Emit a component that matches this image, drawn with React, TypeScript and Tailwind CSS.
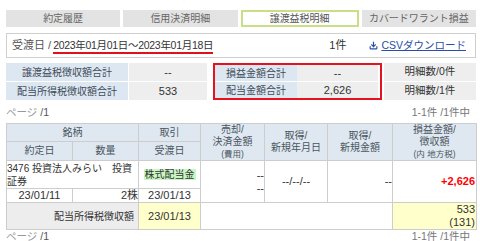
import { Download } from "lucide-react";

const font = "font-['Liberation_Sans','Noto_Sans_CJK_JP',sans-serif]";

const tabs = ["約定履歴", "信用決済明細", "譲渡益税明細", "カバードワラント損益"];

function Tabs() {
  return (
    <div className="flex gap-[3px] text-[10px]">
      {tabs.map((t, i) =>
        i === 2 ? (
          <div
            key={t}
            className="flex h-[17px] flex-1 items-center justify-center border-2 border-[#c8df86] bg-white text-[#555]"
          >
            {t}
          </div>
        ) : (
          <div
            key={t}
            className="flex h-[17px] flex-1 items-center justify-center bg-[#e3e3e3] text-[#666]"
          >
            {t}
          </div>
        )
      )}
    </div>
  );
}

function DateBar() {
  return (
    <div className="mt-[6px] flex h-[25px] items-center border border-[#cfcfcf] bg-white pl-[5px] pr-[5px] text-[11px] text-[#333]">
      <span className="text-[#555]">受渡日 / </span>
      <span className="ml-[2px] border-b-2 border-[#e0101c] text-[10.5px] leading-[14px] tracking-[-0.3px]">
        2023年01月01日～2023年01月18日
      </span>
      <span className="ml-auto mr-[23px] text-[11px]">1件</span>
      <a className="mr-[4px] flex items-center text-[10.5px] text-[#2a4ea8] underline">
        <Download size={9} strokeWidth={3} className="mr-[3px]" />
        CSVダウンロード
      </a>
    </div>
  );
}

function Summary() {
  const label = "flex items-center justify-center bg-[#dde7f1] text-[10px] text-[#3f4b58]";
  const value = "flex items-center justify-center bg-[#eeeeee] text-[#333]";
  return (
    <div className="mt-[5px] flex items-start">
      <div className="grid w-[201px] grid-cols-[122px_78px] grid-rows-[18px_18px] gap-px">
        <div className={label}>譲渡益税徴収額合計</div>
        <div className={value}>--</div>
        <div className={label}>配当所得税徴収額合計</div>
        <div className={value}>533</div>
      </div>
      <div className="ml-[6px] grid w-[169px] grid-cols-[82px_81px] grid-rows-[16px_16px] gap-x-0 gap-y-px border-2 border-[#e5121f] p-0">
        <div className={label}>損益金額合計</div>
        <div className={value}>--</div>
        <div className={label}>配当金額合計</div>
        <div className={value}>2,626</div>
      </div>
      <div className="ml-[2px] grid w-[92px] grid-rows-[18px_18px] gap-px">
        <div className={`${value} text-[10.5px]`}>明細数/0件</div>
        <div className={`${value} text-[10.5px]`}>明細数/1件</div>
      </div>
    </div>
  );
}

function Pager() {
  return (
    <div className="flex h-[14px] items-center justify-between text-[10.5px]">
      <span className="text-[#999]">
        ページ <span className="text-[#555]">/1</span>
      </span>
      <span className="mr-[6px] text-[#777]">1-1件 /1件中</span>
    </div>
  );
}

function MainTable() {
  const th = "border border-[#cdcdcd] bg-[#dfe8f1] font-normal text-[10px] text-[#4a5560] leading-[12px] p-0";
  const td = "border border-[#cdcdcd] p-0 leading-[13px]";
  return (
    <table className="w-[470px] table-fixed border-collapse text-[11px] text-[#333]">
      <colgroup>
        <col className="w-[66px]" />
        <col className="w-[66px]" />
        <col className="w-[62px]" />
        <col className="w-[64px]" />
        <col className="w-[63px]" />
        <col className="w-[65px]" />
        <col className="w-[84px]" />
      </colgroup>
      <thead>
        <tr className="h-[18px]">
          <th colSpan={2} className={th}>銘柄</th>
          <th className={th}>取引</th>
          <th rowSpan={2} className={th}>
            売却/
            <br />
            決済金額
            <br />
            <span className="text-[8.5px]">(費用)</span>
          </th>
          <th rowSpan={2} className={th}>
            取得/
            <br />
            新規年月日
          </th>
          <th rowSpan={2} className={th}>
            取得/
            <br />
            新規金額
          </th>
          <th rowSpan={2} className={th}>
            損益金額/
            <br />
            徴収額
            <br />
            <span className="text-[8.5px]">(内 地方税)</span>
          </th>
        </tr>
        <tr className="h-[19px]">
          <th className={th}>約定日</th>
          <th className={th}>数量</th>
          <th className={th}>受渡日</th>
        </tr>
      </thead>
      <tbody>
        <tr className="h-[26px]">
          <td colSpan={2} className={`${td} text-left align-top text-[10px] pt-[1px]`}>
            3476 投資法人みらい　投資
            <br />
            証券
          </td>
          <td className={`${td} text-center text-[10px]`}>
            <span className="bg-[#c9f7c3] px-px">株式配当金</span>
          </td>
          <td rowSpan={2} className={`${td} text-right`}>
            --
            <br />
            --
          </td>
          <td rowSpan={2} className={`${td} text-center`}>--/--/--</td>
          <td rowSpan={2} className={`${td} text-right`}>--</td>
          <td rowSpan={2} className={`${td} text-right font-bold text-[#f00] pr-[1px]`}>
            +2,626
          </td>
        </tr>
        <tr className="h-[14px]">
          <td className={`${td} text-center`}>23/01/11</td>
          <td className={`${td} text-right`}>2株</td>
          <td className={`${td} text-center`}>23/01/13</td>
        </tr>
        <tr className="h-[26px]">
          <td colSpan={2} className={`${td} bg-[#ededed] text-right text-[10px] pr-[4px]`}>
            配当所得税徴収額
          </td>
          <td className={`${td} bg-[#ffffcc] text-center`}>23/01/13</td>
          <td colSpan={3} className={td}></td>
          <td className={`${td} bg-[#ffffcc] text-right pr-[1px]`}>
            533
            <br />
            (131)
          </td>
        </tr>
      </tbody>
    </table>
  );
}

export default function App() {
  return (
    <div className={`${font} h-[241px] w-[480px] overflow-hidden bg-white text-[11px]`}>
      <div className="ml-[6px] w-[470px] pt-[10px]">
        <Tabs />
        <DateBar />
        <Summary />
        <div className="mt-[6px]">
          <Pager />
        </div>
        <div className="mt-[3px]">
          <MainTable />
        </div>
        <div className="mt-0">
          <Pager />
        </div>
      </div>
    </div>
  );
}
